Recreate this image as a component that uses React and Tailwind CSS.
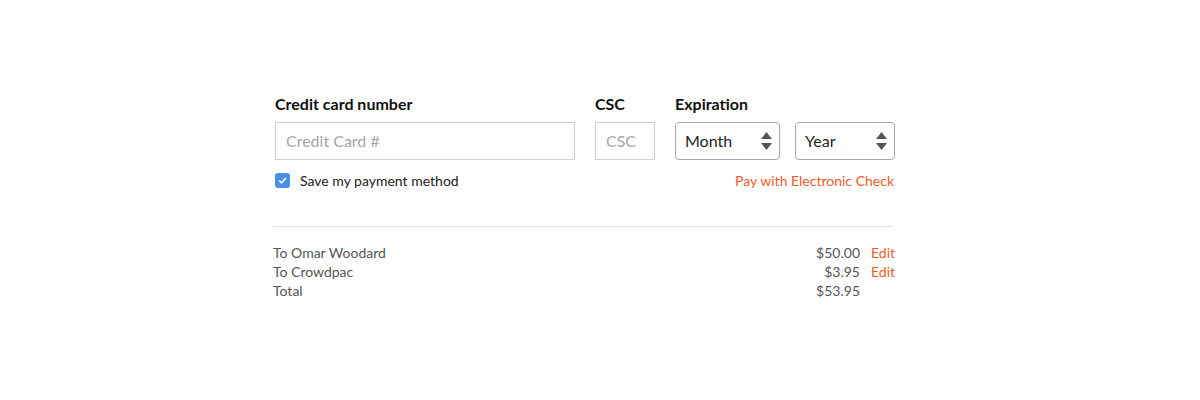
function Stepper() {
  return (
    <svg width="11" height="18" viewBox="0 0 11 18" className="absolute right-[7px] top-[9px]">
      <path d="M5.5 0 L11 7 L0 7 Z" fill="#555" />
      <path d="M0 11 L11 11 L5.5 18 Z" fill="#555" />
    </svg>
  );
}

function Select({ label, width }) {
  return (
    <div className={`relative flex h-[38px] items-center rounded-[4px] border border-[#a8a8a8] bg-white pl-[9px] text-[16px] text-[#222] ${width}`}>
      {label}
      <Stepper />
    </div>
  );
}

export default function App() {
  const rows = [
    { name: 'To Omar Woodard', amount: '$50.00', edit: true },
    { name: 'To Crowdpac', amount: '$3.95', edit: true },
    { name: 'Total', amount: '$53.95', edit: false },
  ];

  return (
    <div className="h-[400px] w-[1200px] bg-white pl-[273px] pt-[92px] font-['Lato',sans-serif]">
      <div className="w-[622px] pl-[2px]">
        {/* Card fields */}
        <div className="flex">
          <div className="flex w-[300px] flex-col">
            <span className="mb-[6px] text-[16px] font-bold leading-[24px] text-[#111]">Credit card number</span>
            <div className="flex h-[38px] items-center border border-[#cfcfcf] pl-[10px] text-[16px] text-[#a6a6a6]">
              Credit Card #
            </div>
          </div>
          <div className="ml-[20px] flex w-[60px] flex-col">
            <span className="mb-[6px] text-[16px] font-bold leading-[24px] text-[#111]">CSC</span>
            <div className="flex h-[38px] items-center border border-[#cfcfcf] pl-[10px] text-[16px] text-[#a6a6a6]">
              CSC
            </div>
          </div>
          <div className="ml-[20px] flex flex-col">
            <span className="mb-[6px] text-[16px] font-bold leading-[24px] text-[#111]">Expiration</span>
            <div className="flex gap-[15px]">
              <Select label="Month" width="w-[105px]" />
              <Select label="Year" width="w-[100px]" />
            </div>
          </div>
        </div>

        <div className="mt-[10px] flex items-center justify-between pr-[1px]">
          <label className="flex items-center gap-[10px] text-[14px] text-[#222]">
            <span className="flex h-[15px] w-[15px] items-center justify-center rounded-[3px] bg-[#4a90e2]">
              <svg width="9" height="7" viewBox="0 0 9 7">
                <path d="M1 3.5 L3.4 5.8 L8 1" stroke="white" strokeWidth="1.6" fill="none" />
              </svg>
            </span>
            Save my payment method
          </label>
          <span className="text-[14px] text-[#f15a2b]">Pay with Electronic Check</span>
        </div>

        <div className="ml-[-2px] mt-[35px] h-px w-[620px] bg-[#e2e2e2]" />

        {/* Summary */}
        <div className="ml-[-2px] mt-[16px] flex flex-col text-[14px] leading-[19px] text-[#555]">
          {rows.map((r) => (
            <div key={r.name} className="flex">
              <span className="flex-1">{r.name}</span>
              <span>{r.amount}</span>
              <span className="ml-[11px] w-[24px] text-[#f15a2b]">{r.edit ? 'Edit' : ''}</span>
            </div>
          ))}
        </div>
      </div>
    </div>
  );
}
